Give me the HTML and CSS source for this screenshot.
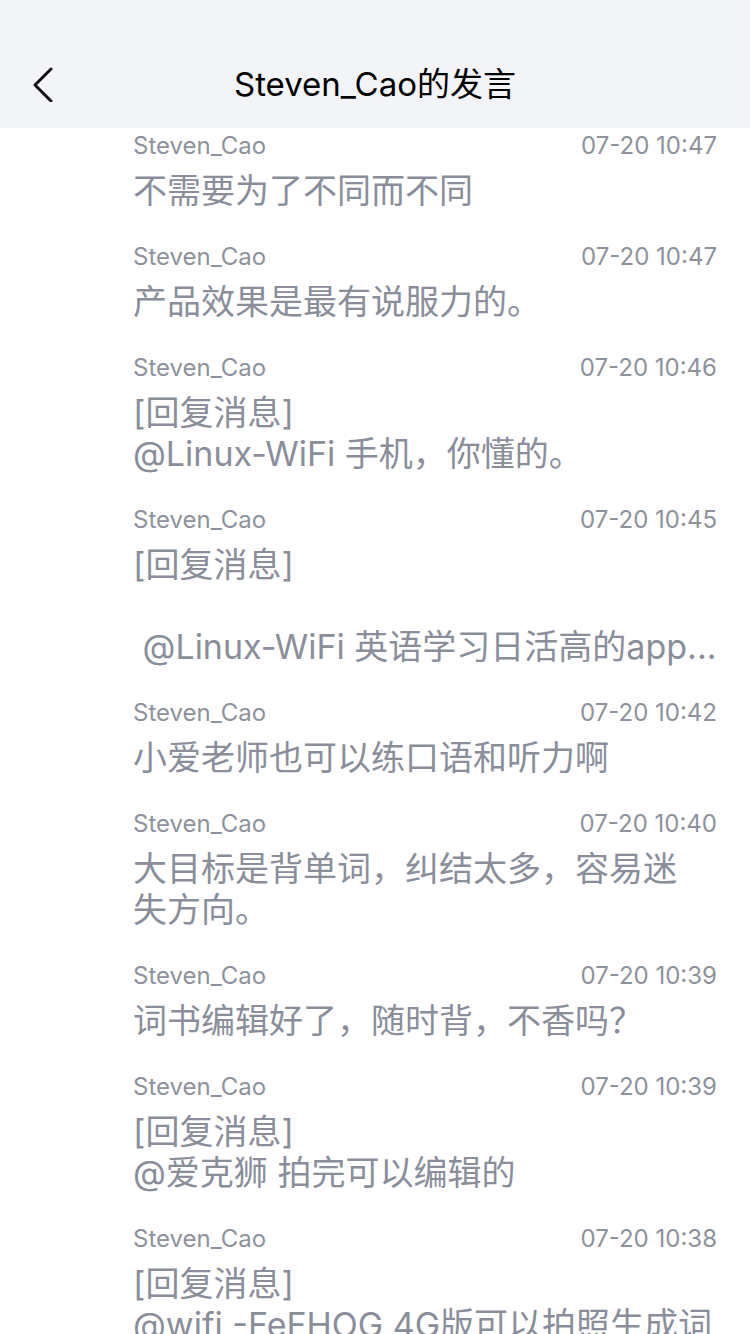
FILE: index.html
```html
<!DOCTYPE html>
<html lang="zh-CN">
<head>
<meta charset="utf-8">
<title>Steven_Cao的发言</title>
<link rel="stylesheet" href="styles.css">
</head>
<body>
<header class="nav">
  <svg class="back" width="24" height="36" viewBox="0 0 24 36"><polyline points="19,3 3,19 19,35" fill="none" stroke="#111" stroke-width="3" stroke-linecap="round" stroke-linejoin="round"/></svg>
  <h1 class="title">Steven_Cao的发言</h1>
</header>
<main class="list">
  <div class="item"><div class="meta"><span class="name">Steven_Cao</span><span class="time">07-20 10:47</span></div><div class="msg">不需要为了不同而不同</div></div>
  <div class="item"><div class="meta"><span class="name">Steven_Cao</span><span class="time">07-20 10:47</span></div><div class="msg">产品效果是最有说服力的。</div></div>
  <div class="item"><div class="meta"><span class="name">Steven_Cao</span><span class="time">07-20 10:46</span></div><div class="msg">[回复消息]
@Linux-WiFi 手机，你懂的。</div></div>
  <div class="item"><div class="meta"><span class="name">Steven_Cao</span><span class="time">07-20 10:45</span></div><div class="msg trunc">[回复消息]

 @Linux-WiFi 英语学习日活高的app...</div></div>
  <div class="item"><div class="meta"><span class="name">Steven_Cao</span><span class="time">07-20 10:42</span></div><div class="msg">小爱老师也可以练口语和听力啊</div></div>
  <div class="item"><div class="meta"><span class="name">Steven_Cao</span><span class="time">07-20 10:40</span></div><div class="msg">大目标是背单词，纠结太多，容易迷失方向。</div></div>
  <div class="item"><div class="meta"><span class="name">Steven_Cao</span><span class="time">07-20 10:39</span></div><div class="msg">词书编辑好了，随时背，不香吗？</div></div>
  <div class="item"><div class="meta"><span class="name">Steven_Cao</span><span class="time">07-20 10:39</span></div><div class="msg">[回复消息]
@爱克狮 拍完可以编辑的</div></div>
  <div class="item"><div class="meta"><span class="name">Steven_Cao</span><span class="time">07-20 10:38</span></div><div class="msg trunc">[回复消息]
@wifi -FeFHOG 4G版可以拍照生成词</div></div>
</main>
</body>
</html>
```
FILE: styles.css
```css
html, body {
  margin: 0;
  padding: 0;
  background: #ffffff;
  font-family: Inter, "Noto Sans CJK SC", sans-serif;
}
.nav {
  height: 128px;
  box-sizing: border-box;
  padding-top: 40px;
  background: #f3f4f8;
  display: flex;
  align-items: center;
  justify-content: center;
  position: relative;
}
.back {
  position: absolute;
  left: 32px;
  top: 66px;
}
.title {
  margin: 0;
  font-size: 33px;
  font-weight: 400;
  color: #000;
  line-height: 88px;
}
.list {
  display: flex;
  flex-direction: column;
}
.item {
  padding: 0 33px 28px 133px;
}
.meta {
  display: flex;
  justify-content: space-between;
  font-size: 24px;
  line-height: 36px;
  color: #8e929c;
}
.msg {
  margin-top: 6px;
  padding-right: 14px;
  font-size: 34px;
  line-height: 41px;
  color: #8a8e9b;
  white-space: pre-wrap;
}
.msg.trunc {
  white-space: pre;
  overflow: hidden;
  padding-right: 0;
}
```
